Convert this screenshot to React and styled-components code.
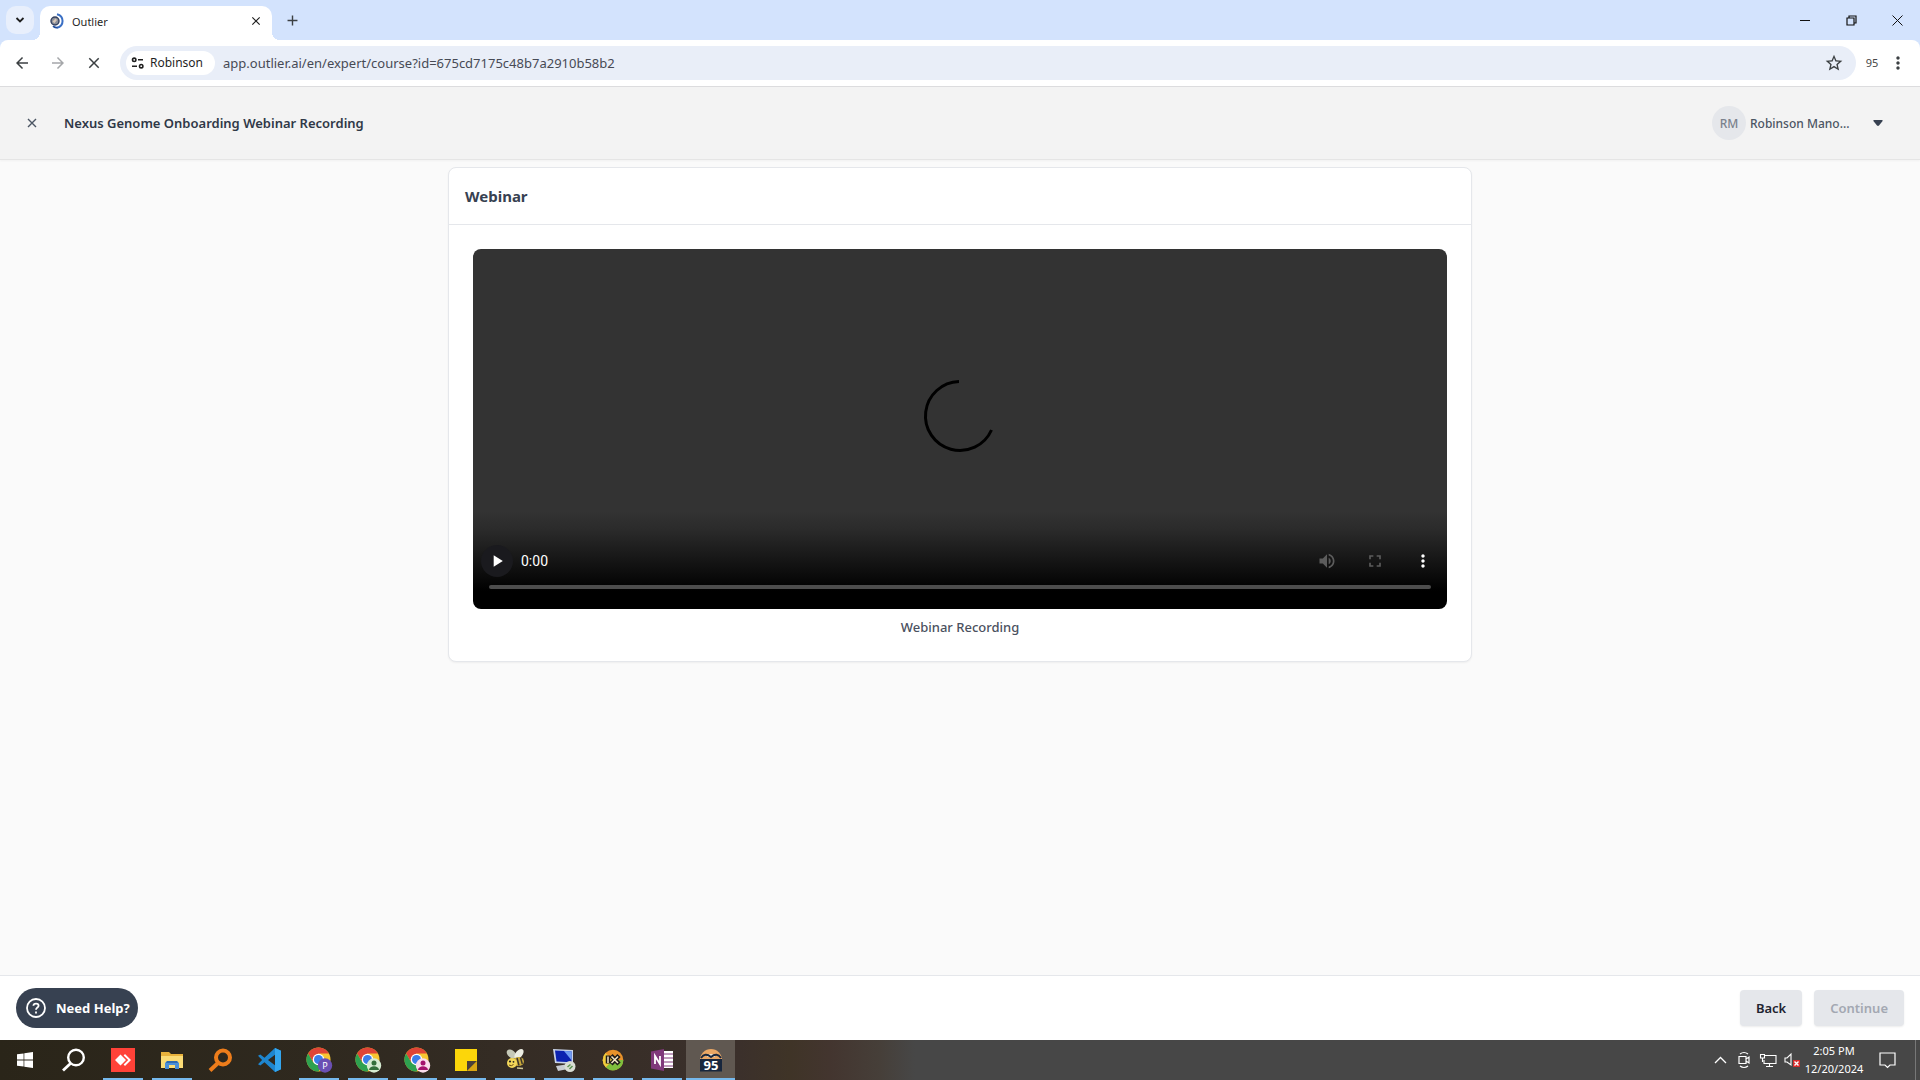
import React from "react";
import styled, { createGlobalStyle, css } from "styled-components";
import { MdStarBorder, MdVolumeUp, MdFullscreen, MdMoreVert, MdPlayArrow, MdArrowBack, MdArrowForward, MdClose, MdAdd } from "react-icons/md";

const Global = createGlobalStyle`
  *, *::before, *::after { box-sizing: border-box; }
  html, body, #root { height: 100%; margin: 0; }
  body { overflow: hidden; font-family: "Noto Sans", "Open Sans", sans-serif; font-size: 13px; color: #374151; }
  button, input { font: inherit; color: inherit; border: 0; background: none; padding: 0; margin: 0; }
  svg { display: block; flex: none; overflow: visible; }
  h1, h2, p { margin: 0; }
`;

const Screen = styled.div`
  height: 100vh;
  display: flex;
  flex-direction: column;
  background: #fafafa;
`;

/* Browser window */
const TabStrip = styled.div`
  height: 40px;
  flex: none;
  display: flex;
  align-items: center;
  background: #d3e3fd;
  padding-left: 6px;
`;
const TabSearch = styled.button`
  width: 28px;
  height: 28px;
  border-radius: 10px;
  background: #e8effc;
  display: grid;
  place-items: center;
  color: #1f1f1f;
`;
const Tab = styled.div`
  position: relative;
  align-self: flex-end;
  width: 232px;
  height: 34px;
  margin-left: 6px;
  padding: 0 8px 4px 10px;
  display: flex;
  align-items: center;
  gap: 8px;
  border-radius: 10px 10px 0 0;
  background: #fff;
  color: #1f1f1f;
  font-size: 11px;
  &::before, &::after {
    content: "";
    position: absolute;
    bottom: 0;
    width: 8px;
    height: 8px;
  }
  &::before { right: 100%; background: radial-gradient(circle at 0 0, transparent 8px, #fff 8px); }
  &::after { left: 100%; background: radial-gradient(circle at 100% 0, transparent 8px, #fff 8px); }
`;
const TabTitle = styled.span`flex: 1;`;
const IconButton = styled.button`
  width: ${(p) => p.$w || 28}px;
  height: 28px;
  display: grid;
  place-items: center;
  color: ${(p) => p.$color || "#3c4043"};
`;
const WindowControls = styled.div`
  margin-left: auto;
  display: flex;
`;
const ToolbarWrap = styled.div`
  flex: none;
  background: #d3e3fd;
`;
const Toolbar = styled.div`
  height: 47px;
  display: flex;
  align-items: center;
  padding: 0 12px 1px 8px;
  border-bottom: 1px solid #dcdcde;
  border-radius: 8px 8px 0 0;
  background: #fff;
`;
const NavButtons = styled.div`
  display: flex;
  gap: 8px;
  margin-right: 12px;
`;
const Omnibox = styled.div`
  flex: 1;
  height: 34px;
  display: flex;
  align-items: center;
  padding: 0 8px 0 6px;
  border-radius: 17px;
  background: #e9eef8;
`;
const SiteChip = styled.button`
  height: 24px;
  display: flex;
  align-items: center;
  gap: 4px;
  padding: 0 12px 0 4px;
  border-radius: 12px;
  background: #fff;
  color: #1f1f1f;
  font-size: 12px;
`;
const UrlInput = styled.input`
  flex: 1;
  margin-left: 8px;
  outline: none;
  color: #474a55;
`;
const ProfileCount = styled.span`
  width: 32px;
  text-align: center;
  font-size: 11px;
  color: #474747;
`;

/* Course page */
const CourseHeader = styled.header`
  height: 73px;
  flex: none;
  display: flex;
  align-items: center;
  padding: 0 28px 0 18px;
  background: #f3f3f3;
  border-bottom: 1px solid #e5e5e5;
  box-shadow: 0 1px 2px rgba(0, 0, 0, 0.04);
`;
const CourseTitle = styled.h1`
  margin-left: 18px;
  font-size: 13px;
  font-weight: 600;
  color: #2f3847;
`;
const UserMenu = styled.button`
  margin-left: auto;
  display: flex;
  align-items: center;
  color: #4b5563;
  font-size: 12px;
  font-weight: 500;
`;
const Avatar = styled.span`
  width: 34px;
  height: 34px;
  margin-right: 4px;
  border-radius: 50%;
  display: grid;
  place-items: center;
  background: #e5e7eb;
  color: #7b828d;
`;
const UserName = styled.span`
  width: 114px;
  text-align: left;
`;
const Main = styled.main`
  flex: 1;
  min-height: 0;
  padding: 7px 24px;
`;
const Card = styled.section`
  max-width: 1024px;
  margin: 0 auto;
  border: 1px solid #e5e7eb;
  border-radius: 8px;
  background: #fff;
  box-shadow: 0 1px 2px rgba(0, 0, 0, 0.05);
`;
const CardHeader = styled.div`
  padding: 16px;
  border-bottom: 1px solid #e5e7eb;
`;
const CardTitle = styled.h2`
  font-size: 15px;
  line-height: 24px;
  font-weight: 700;
  color: #374151;
`;
const CardBody = styled.div`padding: 24px;`;
const Figure = styled.figure`margin: 0;`;
const Caption = styled.figcaption`
  margin-top: 8px;
  line-height: 20px;
  text-align: center;
  font-weight: 500;
  color: #4b5160;
`;
const Player = styled.div`
  height: 360px;
  display: flex;
  flex-direction: column;
  border-radius: 8px;
  overflow: hidden;
  background: linear-gradient(#333 0, #333 262px, #2b2b2b 280px, #0a0a0a 328px, #000 342px);
`;
const Stage = styled.div`
  flex: 1;
  display: grid;
  place-items: center;
  padding-top: 46px;
`;
const Controls = styled.div`
  height: 48px;
  display: flex;
  align-items: center;
  gap: 8px;
  padding: 0 8px;
  color: #fff;
`;
const ControlGroup = styled.div`
  display: flex;
  gap: 16px;
`;
const ControlButton = styled.button`
  width: 32px;
  height: 32px;
  border-radius: 50%;
  display: grid;
  place-items: center;
  background: ${(p) => (p.$filled ? "#1a1a1e" : "none")};
  color: ${(p) => (p.$dim ? "#5c5c5c" : "#fff")};
`;
const Time = styled.span`
  flex: 1;
  font-family: Roboto, sans-serif;
  font-size: 14px;
`;
const Timeline = styled.input`
  appearance: none;
  height: 4px;
  margin: 0 16px 20px;
  border-radius: 2px;
  background: #4d4d4d;
  &::-webkit-slider-thumb { appearance: none; width: 0; height: 0; }
`;
const Footer = styled.footer`
  height: 65px;
  flex: none;
  display: flex;
  align-items: center;
  gap: 12px;
  padding: 0 16px;
  border-top: 1px solid #e5e7eb;
  background: #fff;
`;
const HelpButton = styled.button`
  height: 40px;
  margin-right: auto;
  display: flex;
  align-items: center;
  gap: 10px;
  padding: 0 8px 0 10px;
  border-radius: 20px;
  background: #374151;
  color: #fff;
  font-weight: 700;
`;
const FooterButton = styled.button`
  height: 36px;
  padding: 0 16px;
  border-radius: 4px;
  background: #e5e7eb;
  color: #1f2430;
  font-weight: 600;
  box-shadow: 0 1px 2px rgba(0, 0, 0, 0.08);
  &:disabled { color: #a3a8b2; }
`;

/* Desktop taskbar */
const Taskbar = styled.nav`
  height: 40px;
  flex: none;
  display: flex;
  background: linear-gradient(90deg, #2a2519 0, #2f291f 320px, #3b302b 740px, #3f3427 790px, #43352f 830px, #463f39 880px, #474747 915px);
  color: #fff;
`;
const TaskButton = styled.button`
  width: 49px;
  height: 40px;
  display: grid;
  place-items: center;
  ${(p) => p.$open && css`
    background: linear-gradient(#76b9ed, #76b9ed) center bottom / 40px 2px no-repeat;
  `}
  ${(p) => p.$active && css`
    background: linear-gradient(#76b9ed, #76b9ed) center bottom / 100% 2px no-repeat, #605851;
  `}
`;
const Tray = styled.div`
  margin-left: auto;
  display: flex;
  align-items: center;
`;
const TrayButton = styled.button`
  width: 24px;
  height: 40px;
  display: grid;
  place-items: center;
`;
const Clock = styled.time`
  width: 60px;
  font-size: 11px;
  line-height: 18px;
  text-align: center;
`;
const NoticeButton = styled(TrayButton)`
  width: 46px;
  margin-right: 5px;
`;
const ShowDesktop = styled.div`
  width: 5px;
  height: 40px;
  border-left: 1px solid #777;
`;

const Favicon = () => (
  <svg width="14" height="16" viewBox="0 0 14 16">
    <circle cx="5" cy="8" r="4" fill="#8b8f99" stroke="#33405e" strokeWidth="1.4" />
    <path d="M2.5 8.5l3-3 1.5 1.6-2.6 3.2z" fill="#d8c7b8" />
    <path d="M7 1.2c7.4 1.8 7.4 11.8 0 13.6" fill="none" stroke="#3a6fc4" strokeWidth="2" />
    <path d="M3 13.2c1.5 1.4 3 1.6 4.5 1.2" fill="none" stroke="#1f4c9c" strokeWidth="1.6" />
  </svg>
);

const TuneIcon = () => (
  <svg width="16" height="16" viewBox="0 0 16 16" fill="none" stroke="#1f1f1f" strokeWidth="1.6">
    <circle cx="4.2" cy="4.8" r="1.7" /><path d="M8 4.8h5M2 11.2h5" /><circle cx="11.2" cy="11.2" r="1.7" />
  </svg>
);

const Spinner = () => (
  <svg width="72" height="72" viewBox="0 0 72 72" fill="none" stroke="#000" strokeWidth="3">
    <path d="M35 1.5A34.5 34.5 0 1 0 67.5 50" />
  </svg>
);

const HelpIcon = () => (
  <svg width="20" height="20" viewBox="0 0 20 20" fill="none" stroke="#fff" strokeWidth="1.8">
    <circle cx="10" cy="10" r="9" />
    <path d="M7.4 7.8C7.6 4.8 12.6 4.9 12.6 7.8 12.6 9.6 10 9.6 10 11.8" />
    <path d="M10 13.4v2" />
  </svg>
);

const WindowsLogo = () => (
  <svg width="16" height="16" viewBox="0 0 16 16" fill="#fff">
    <path d="M0 2.3l6.6-.9v6.2H0zM7.3 1.3L16 0v7.6H7.3zM0 8.4h6.6v6.2L0 13.7zM7.3 8.4H16V16l-8.7-1.2z" />
  </svg>
);

const Magnifier = ({ color, inner }) => (
  <svg width="24" height="24" viewBox="0 0 24 24" fill="none" stroke={color}>
    <circle cx="14" cy="9.5" r={inner ? 7 : 7.8} strokeWidth={inner ? 4 : 2.4} />
    <path d="M9 15L1 22.5" strokeWidth={inner ? 4 : 2.8} />
  </svg>
);

const AnyDesk = () => (
  <svg width="24" height="24" viewBox="0 0 24 24">
    <path fill="#ff4238" d="M0 0h24v24H0z" />
    <path fill="#fff" d="M9.500 6.500l5.500 5.500-5.500 5.500L4 12zM12.600 7.400L14 6l6 6-6 6-1.400-1.400L17.200 12z" />
  </svg>
);

const Explorer = () => (
  <svg width="24" height="24" viewBox="0 0 24 24">
    <path fill="#e8b23c" d="M1 4h8l2 2h12v5H1z" />
    <path fill="#fbdc76" d="M1 8h22v12H1z" />
    <path fill="#4a8fd8" d="M5 21v-6l2-2h10l2 2v6h-4v-4H9v4z" />
    <path fill="#2e6bb3" d="M7 13h10l1 2H6z" />
  </svg>
);

const VSCode = () => (
  <svg width="24" height="24" viewBox="0 0 24 24">
    <path fill="#1e86cf" d="M17 0l6 2.8v18.4L17 24 6.5 14.2 2.3 17.4 0 16.2l4.1-4.2L0 7.8l2.3-1.2 4.2 3.2zM17 6.7L10 12l7 5.3z" fillRule="evenodd" />
    <path fill="#34a6ee" d="M17 0l6 2.8v18.4L17 24z" />
  </svg>
);

const Chrome = ({ badge, person, letter }) => (
  <svg width="26" height="26" viewBox="0 0 26 26">
    <circle cx="12.500" cy="12.500" r="12" fill="#f7c531" />
    <path fill="#df4436" d="M2.100 6.500A12 12 0 0 1 22.900 6.500H12.500L7.300 15.500z" />
    <path fill="#2ea150" d="M2.100 6.500A12 12 0 0 0 12.500 24.500L17.700 15.500H7.300z" />
    <circle cx="12.500" cy="12.500" r="5.800" fill="#fff" />
    <circle cx="12.500" cy="12.500" r="4.500" fill="#3b7de9" />
    <circle cx="19" cy="18.500" r="7.200" fill={badge} />
    {letter ? (
      <text x="19" y="22" textAnchor="middle" fontSize="9" fill="#fff">{letter}</text>
    ) : (
      <g fill={person}><circle cx="19" cy="16" r="2.500" /><path d="M14 23c.4-5 9.600-5 10 0z" /></g>
    )}
  </svg>
);

const StickyNotes = () => (
  <svg width="22" height="22" viewBox="0 0 22 22">
    <path fill="#fcd60a" d="M0 0h22v12L12 22H0z" />
    <path fill="#4b4039" d="M12 12h10L12 22z" />
    <path fill="#d9a514" d="M22 12v10H12z" />
  </svg>
);

const Bee = () => (
  <svg width="24" height="22" viewBox="0 0 24 22">
    <ellipse cx="8.500" cy="5" rx="5.500" ry="3.600" fill="#c5c9b8" transform="rotate(40 8.500 5)" />
    <ellipse cx="16" cy="5" rx="6" ry="3.400" fill="#eceee3" transform="rotate(-50 16 5)" />
    <ellipse cx="15.500" cy="12.500" rx="5.500" ry="4.500" fill="#c9a93c" />
    <path d="M14 9l2 7.500M17.500 8.500l1.800 6.500" stroke="#3a352b" strokeWidth="1.500" />
    <circle cx="9" cy="14" r="5" fill="#f3d85a" />
    <circle cx="7" cy="12.500" r="1.100" fill="#222" /><circle cx="10.500" cy="12.800" r=".9" fill="#222" />
    <path d="M6 16q2.500 1.600 4.500-.5" stroke="#6c4a12" fill="none" />
    <path d="M14 19l6 .5" stroke="#cfc795" strokeWidth="1.400" />
  </svg>
);

const RemotePC = () => (
  <svg width="24" height="24" viewBox="0 0 24 24">
    <path fill="#c9d3e8" d="M1 1l20 1v14L3 15z" />
    <path fill="#0c22b0" d="M3 2.500l16.500.8v11L4.500 13.500z" />
    <path fill="#6f9cf2" d="M12 3l7.500.3v9z" />
    <path fill="#c8ccd2" d="M4 18l10-1.500 2 4.500-10 2z" />
    <circle cx="18" cy="18.500" r="5.500" fill="#d9ddd4" />
    <path d="M15.500 19l3-2.500M17.500 21l3-3" stroke="#5a9351" strokeWidth="1.500" />
  </svg>
);

const IxIcon = () => (
  <svg width="22" height="22" viewBox="0 0 22 22">
    <circle cx="11" cy="11" r="10.300" fill="#e8922a" />
    <path fill="#7fbf3d" d="M11 11L3.700 18.300A10.300 10.300 0 0 0 21.300 11z" />
    <path fill="#f0ce3c" d="M11 11L3.500 4A10.300 10.300 0 0 0 3.700 18.300z" />
    <path d="M6 6.500v8M9 6.500l8 8.500M17 6.500l-8 8.500" stroke="#1f1b18" strokeWidth="4.500" />
    <path d="M6 7.500v6.500M9.500 7.500l6.500 6.500M16 7.500l-6.500 6.500" stroke="#f6e9c8" strokeWidth="1.500" />
  </svg>
);

const OneNote = () => (
  <svg width="24" height="22" viewBox="0 0 24 22">
    <path fill="#fff" d="M12 2h11v17H12z" />
    <path d="M14 5h9M14 9h9M14 13h9M14 17h9" stroke="#80397b" />
    <path fill="#80397b" d="M1 2.500L14 0v22L1 19.500z" />
    <path d="M5 15V7l5 8V7" fill="none" stroke="#fff" strokeWidth="1.800" />
  </svg>
);

const Meter = () => (
  <svg width="24" height="24" viewBox="0 0 24 24">
    <path fill="#e9a765" d="M1 12a11 11 0 0 1 22 0z" />
    <path fill="#e9e4da" d="M8 9a4 3 0 0 1 8 0z" />
    <path d="M2 10q4-6 10-1 6-5 10 1" fill="none" stroke="#17263d" strokeWidth="1.800" />
    <path fill="#17263d" d="M1 11h22v12.500H1z" />
    <text x="12" y="22" textAnchor="middle" fontSize="13" fontWeight="700" fill="#fff">95</text>
  </svg>
);

const tasks = [
  { label: "AnyDesk", icon: <AnyDesk />, open: true },
  { label: "File Explorer", icon: <Explorer />, open: true },
  { label: "Search tool", icon: <Magnifier color="#ee7d1b" inner /> },
  { label: "Visual Studio Code", icon: <VSCode /> },
  { label: "Chrome profile P", icon: <Chrome badge="#6a4fb3" letter="P" />, open: true },
  { label: "Chrome profile 2", icon: <Chrome badge="#d6ecd2" person="#33703a" />, open: true },
  { label: "Chrome profile 3", icon: <Chrome badge="#fbdcec" person="#a5126c" />, open: true },
  { label: "Sticky Notes", icon: <StickyNotes />, open: true },
  { label: "Bee", icon: <Bee />, open: true },
  { label: "Remote Desktop", icon: <RemotePC />, open: true },
  { label: "IX", icon: <IxIcon />, open: true },
  { label: "OneNote", icon: <OneNote />, open: true },
  { label: "Time tracker", icon: <Meter />, open: true, active: true },
];

export default function App() {
  return (
    <Screen>
      <Global />
      <TabStrip>
        <TabSearch aria-label="Search tabs">
          <svg width="10" height="8" viewBox="0 0 10 8" fill="none" stroke="currentColor" strokeWidth="1.8"><path d="M1.5 2L5 5.5 8.5 2" /></svg>
        </TabSearch>
        <Tab>
          <Favicon />
          <TabTitle>Outlier</TabTitle>
          <IconButton $w={16} $color="#1f1f1f" aria-label="Close tab"><MdClose size={14} /></IconButton>
        </Tab>
        <IconButton $w={40} aria-label="New tab"><MdAdd size={17} /></IconButton>
        <WindowControls>
          <IconButton $w={46} $color="#111" aria-label="Minimize">
            <svg width="10" height="10" stroke="currentColor"><path d="M0 5.5h10" /></svg>
          </IconButton>
          <IconButton $w={46} $color="#111" aria-label="Restore">
            <svg width="11" height="11" fill="none" stroke="currentColor" strokeWidth="1.2"><path d="M1 3h7v7H1zM3 3V1h7v7H8" /></svg>
          </IconButton>
          <IconButton $w={46} $color="#111" aria-label="Close window">
            <svg width="11" height="11" stroke="currentColor"><path d="M.5.5l10 10M10.5.5l-10 10" /></svg>
          </IconButton>
        </WindowControls>
      </TabStrip>
      <ToolbarWrap>
        <Toolbar>
          <NavButtons>
            <IconButton aria-label="Back"><MdArrowBack size={18} /></IconButton>
            <IconButton $color="#a5a7aa" aria-label="Forward"><MdArrowForward size={18} /></IconButton>
            <IconButton aria-label="Stop"><MdClose size={18} /></IconButton>
          </NavButtons>
          <Omnibox>
            <SiteChip><TuneIcon />Robinson</SiteChip>
            <UrlInput aria-label="Address" defaultValue="app.outlier.ai/en/expert/course?id=675cd7175c48b7a2910b58b2" />
            <IconButton aria-label="Bookmark"><MdStarBorder size={20} /></IconButton>
          </Omnibox>
          <ProfileCount>95</ProfileCount>
          <IconButton $w={20} aria-label="Browser menu"><MdMoreVert size={20} /></IconButton>
        </Toolbar>
      </ToolbarWrap>

      <CourseHeader>
        <IconButton aria-label="Close course">
          <svg width="10" height="10" stroke="#4b5563" strokeWidth="1.4"><path d="M1 1l8 8M9 1l-8 8" /></svg>
        </IconButton>
        <CourseTitle>Nexus Genome Onboarding Webinar Recording</CourseTitle>
        <UserMenu>
          <Avatar>RM</Avatar>
          <UserName>Robinson Mano...</UserName>
          <IconButton as="span">
            <svg width="10" height="6"><path d="M1 0h8q1 0 .6 1L6 5.500q-1 .8-2 0L.4 1Q0 0 1 0z" fill="#374151" /></svg>
          </IconButton>
        </UserMenu>
      </CourseHeader>

      <Main>
        <Card>
          <CardHeader><CardTitle>Webinar</CardTitle></CardHeader>
          <CardBody>
            <Figure>
              <Player>
                <Stage><Spinner /></Stage>
                <Controls>
                  <ControlButton $filled aria-label="Play"><MdPlayArrow size={20} /></ControlButton>
                  <Time>0:00</Time>
                  <ControlGroup>
                    <ControlButton $dim aria-label="Mute"><MdVolumeUp size={20} /></ControlButton>
                    <ControlButton $dim aria-label="Full screen"><MdFullscreen size={20} /></ControlButton>
                    <ControlButton aria-label="More options"><MdMoreVert size={20} /></ControlButton>
                  </ControlGroup>
                </Controls>
                <Timeline type="range" aria-label="Playback position" min="0" max="100" defaultValue="0" />
              </Player>
              <Caption>Webinar Recording</Caption>
            </Figure>
          </CardBody>
        </Card>
      </Main>

      <Footer>
        <HelpButton><HelpIcon />Need Help?</HelpButton>
        <FooterButton>Back</FooterButton>
        <FooterButton disabled>Continue</FooterButton>
      </Footer>

      <Taskbar>
        <TaskButton aria-label="Start"><WindowsLogo /></TaskButton>
        <TaskButton aria-label="Search"><Magnifier color="#fff" /></TaskButton>
        {tasks.map((t) => (
          <TaskButton key={t.label} aria-label={t.label} $open={t.open} $active={t.active}>{t.icon}</TaskButton>
        ))}
        <Tray>
          <TrayButton aria-label="Hidden icons">
            <svg width="13" height="8" fill="none" stroke="#fff" strokeWidth="1.3"><path d="M1 7l5.500-5.500L12 7" /></svg>
          </TrayButton>
          <TrayButton aria-label="Meet now">
            <svg width="12" height="18" viewBox="0 0 12 18" fill="none" stroke="#fff" strokeWidth="1.2">
              <path d="M1 5.500h7v7H1zM8 8l3-2v6L8 10M2 3q4-3 8 0M2 15q4 3 8 0" />
            </svg>
          </TrayButton>
          <TrayButton aria-label="Network">
            <svg width="17" height="15" viewBox="0 0 17 15" fill="none" stroke="#fff" strokeWidth="1.1">
              <path d="M5 2.500h11v8H4V7M6 13.500h7M9.500 10.500v3M.5 1.500h4V5H.5zM2.500 5v4" />
            </svg>
          </TrayButton>
          <TrayButton aria-label="Volume muted">
            <svg width="17" height="15" viewBox="0 0 17 15" fill="none">
              <path d="M1 5h2l4-4v11L3 9H1z" stroke="#fff" strokeWidth="1.1" />
              <path d="M9 7h7v7H9z" fill="#d52b2b" /><path d="M10.500 8.500l4 4M14.500 8.500l-4 4" stroke="#fff" strokeWidth="1.4" />
            </svg>
          </TrayButton>
          <Clock>2:05 PM<br />12/20/2024</Clock>
          <NoticeButton aria-label="Notifications">
            <svg width="17" height="17" fill="none" stroke="#fff" strokeWidth="1.200"><path d="M1 1h15v12h-5l-2.500 2.500L6 13H1z" /></svg>
          </NoticeButton>
          <ShowDesktop />
        </Tray>
      </Taskbar>
    </Screen>
  );
}
